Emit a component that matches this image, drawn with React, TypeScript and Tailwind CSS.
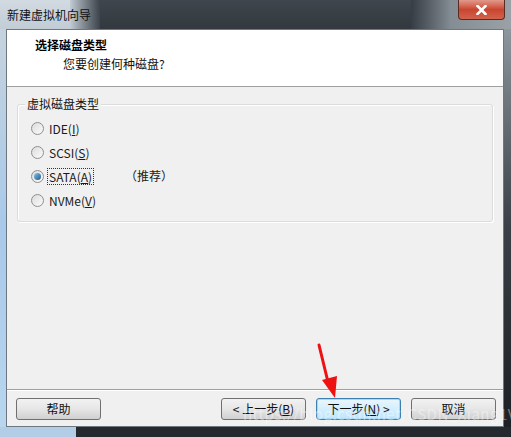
import React from "react";

const font = { fontFamily: '"Noto Sans CJK SC", "Noto Sans", sans-serif' };

const Radio = ({ checked }: { checked?: boolean }) => (
  <span className="relative inline-flex h-[13px] w-[13px] shrink-0 items-center justify-center rounded-full border border-[#8e8f8f] bg-gradient-to-br from-[#dcdcdc] to-[#fbfbfb]">
    {checked ? (
      <span className="h-[7px] w-[7px] rounded-full bg-gradient-to-br from-[#87c1e8] to-[#1d5b8e]" />
    ) : null}
  </span>
);

const Option = ({
  label,
  accel,
  rest,
  checked,
  extra
}: {
  label: string;
  accel: string;
  rest: string;
  checked?: boolean;
  extra?: string;
}) => (
  <div className="flex h-[24px] items-center gap-[4px] pl-[13px]">
    <Radio checked={checked} />
    <span
      className={`px-[1px] text-[12px] leading-[15px] text-[#1a1a1a] ${
        checked ? "outline-1 outline-dotted outline-[#333]" : ""
      }`}
    >
      {label}
      <span className="underline">{accel}</span>
      {rest}
    </span>
    {extra ? <span className="ml-[28px] text-[12px] text-[#1a1a1a]">{extra}</span> : null}
  </div>
);

const Button = ({ children, focused }: { children: React.ReactNode; focused?: boolean }) => (
  <button
    type="button"
    className={`flex h-[22px] w-[85px] items-center justify-center rounded-[3px] border text-[12px] text-[#111] ${
      focused
        ? "border-[#3c7fb1] bg-gradient-to-b from-[#eaf6fd] to-[#bee6fd] shadow-[inset_0_0_0_1px_#a7d9f5]"
        : "border-[#707070] bg-gradient-to-b from-[#f2f2f2] via-[#e6e6e6] to-[#d0d0d0]"
    }`}
  >
    {children}
  </button>
);

export default function App() {
  return (
    <div className="relative h-[437px] w-[511px] overflow-hidden bg-[#2b2f33]" style={font}>
      {/* title bar */}
      <div className="relative flex h-[29px] items-center pl-[7px]">
        {/* glass background */}
        <div className="absolute inset-0 flex">
          <div className="w-[70px] bg-gradient-to-b from-[#d2dbe2] to-[#c2ccd4]" />
          <div className="w-[30px] bg-gradient-to-r from-[#c2ccd4] to-[#3d444b]" />
          <div className="flex-1 bg-gradient-to-b from-[#3f464d] to-[#32383e]" />
          <div className="w-[40px] bg-gradient-to-r from-[#363d44] to-[#858d94]" />
          <div className="w-[60px] bg-gradient-to-r from-[#858d94] to-[#9aa2a8]" />
        </div>
        <span className="relative text-[12px] text-[#111]">新建虚拟机向导</span>
        <div className="absolute right-[6px] top-0 flex h-[20px] w-[47px] items-center justify-center rounded-b-[4px] border border-t-0 border-[#5a2a24] bg-gradient-to-b from-[#e2998b] via-[#c9452f] to-[#d2624c]">
          <svg width="11" height="10" viewBox="0 0 11 10">
            <path d="M1.5 1 L9.5 9 M9.5 1 L1.5 9" stroke="#fff" strokeWidth="2.6" strokeLinecap="square" />
          </svg>
        </div>
      </div>

      <div className="flex h-[398px]">
        {/* left frame */}
        <div className="w-[6px] bg-gradient-to-b from-[#c5d3de] via-[#a9c9ea] to-[#b9d6ef]" />
        <div className="flex w-[498px] flex-col border border-[#6d7780] bg-[#f0f0f0]">
          {/* header */}
          <div className="flex h-[57px] flex-col border-b border-[#a0a0a0] bg-white pl-[28px] pt-[5px]">
            <span className="text-[12px] font-bold leading-[20px] text-[#000]">选择磁盘类型</span>
            <span className="pl-[28px] text-[12px] leading-[18px] text-[#111]">您要创建何种磁盘?</span>
          </div>

          {/* group box */}
          <div className="flex-1 px-[10px] pt-[17px]">
            <div className="relative h-[118px] rounded-[3px] border border-[#dcdcdc] pt-[11px] shadow-[inset_1px_1px_0_#fff,1px_1px_0_#fff]">
              <span className="absolute -top-[9px] left-[7px] bg-[#f0f0f0] px-[2px] text-[12px] leading-[16px] text-[#111]">
                虚拟磁盘类型
              </span>
              <Option label="IDE(" accel="I" rest=")" />
              <Option label="SCSI(" accel="S" rest=")" />
              <Option label="SATA(" accel="A" rest=")" checked extra="（推荐）" />
              <Option label="NVMe(" accel="V" rest=")" />
            </div>
          </div>

          {/* footer */}
          <div className="border-t border-[#a0a0a0] shadow-[inset_0_1px_0_#fff]">
            <div className="flex h-[36px] items-center pl-[9px] pr-[7px] pt-[1px]">
              <Button>帮助</Button>
              <div className="flex-1" />
              <div className="flex gap-[10px]">
                <Button>&lt; 上一步(<span className="underline">B</span>)</Button>
                <Button focused>
                  下一步(<span className="underline">N</span>) &gt;
                </Button>
                <Button>取消</Button>
              </div>
            </div>
          </div>
        </div>
        {/* right frame */}
        <div className="w-[7px] bg-gradient-to-b from-[#8f979e] via-[#3a4046] to-[#1d2024]" />
      </div>

      {/* bottom frame */}
      <div className="flex h-[10px]">
        <div className="w-[76px] bg-[#b3cde6]" />
        <div className="flex-1 bg-[#25292d]" />
      </div>

      {/* watermark */}
      <span className="pointer-events-none absolute left-[243px] top-[403px] text-[15px] tracking-[0.5px] text-white/40">
        https://blog.csdn.net/CSDN_Xiang1V
      </span>

      {/* red arrow */}
      <svg className="pointer-events-none absolute left-0 top-0" width="511" height="437">
        <path d="M319 345 L328 382" stroke="#ee1111" strokeWidth="3" strokeLinecap="round" />
        <path d="M322 380 L335 398 L337 376 Z" fill="#ee1111" />
      </svg>
    </div>
  );
}
